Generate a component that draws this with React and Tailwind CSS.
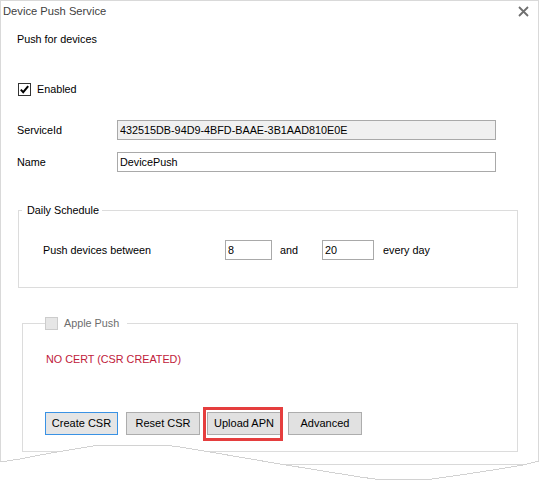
import React from "react";

function Check() {
  return (
    <div className="w-[13px] h-[13px] border border-[#333333] bg-white flex items-center justify-center">
      <svg width="11" height="11" viewBox="0 0 11 11">
        <path d="M1.8 5.6 L4.2 8.2 L9.2 2.2" fill="none" stroke="#000" strokeWidth="2" />
      </svg>
    </div>
  );
}

function Btn({ children, focused }) {
  return (
    <button
      className={
        focused
          ? "h-[23px] w-[73px] border border-[#3a92e4] bg-[#e5e5e5] text-[11px] text-black leading-none"
          : "h-[23px] w-[74px] border border-[#adadad] bg-[#e1e1e1] text-[11px] text-black leading-none"
      }
    >
      {children}
    </button>
  );
}

export default function App() {
  return (
    <div className="relative w-[539px] h-[481px] overflow-hidden bg-white text-[10.8px] text-black font-['Liberation_Sans',Arial,sans-serif]">
      <div className="w-[539px] h-[465px] border border-[#d9d9d9] flex flex-col">
        {/* title bar */}
        <div className="h-[21px] flex items-center justify-between pl-[2px] pr-[9px]">
          <span className="text-[11.2px] text-[#3f3f3f]">Device Push Service</span>
          <svg width="11" height="11" viewBox="0 0 11 11">
            <path d="M1 1 L10 10 M10 1 L1 10" stroke="#6f6f6f" strokeWidth="1.8" />
          </svg>
        </div>

        <div className="flex flex-col pl-[16px]">
          <div className="mt-[11px] h-[13px] leading-[13px]">Push for devices</div>

          <div className="mt-[37px] h-[13px] flex items-center ml-[1px]">
            <Check />
            <span className="ml-[6px] leading-[13px]">Enabled</span>
          </div>

          <div className="mt-[24px] h-[20px] flex items-center">
            <span className="w-[100px]">ServiceId</span>
            <input
              readOnly
              value="432515DB-94D9-4BFD-BAAE-3B1AAD810E0E"
              className="w-[379px] h-[20px] border border-[#a9a9a9] bg-[#f0f0f0] pl-[2px] text-[10.8px] outline-none"
            />
          </div>

          <div className="mt-[12px] h-[20px] flex items-center">
            <span className="w-[100px]">Name</span>
            <input
              readOnly
              value="DevicePush"
              className="w-[379px] h-[20px] border border-[#a9a9a9] bg-white pl-[2px] text-[10.8px] outline-none"
            />
          </div>

          {/* Daily Schedule */}
          <div className="relative mt-[38px] ml-[1px] w-[500px] h-[78px] border border-[#dcdcdc]">
            <span className="absolute left-[3px] -top-[7px] bg-white pl-[5px] pr-[3px] leading-[13px]">
              Daily Schedule
            </span>
            <div className="pt-[29px] pl-[24px] flex items-center">
              <span className="w-[182px]">Push devices between</span>
              <input
                readOnly
                value="8"
                className="w-[47px] h-[20px] border border-[#a9a9a9] bg-white pl-[2px] text-[10.8px] outline-none"
              />
              <span className="ml-[8px] w-[42px]">and</span>
              <input
                readOnly
                value="20"
                className="w-[52px] h-[20px] border border-[#a9a9a9] bg-white pl-[2px] text-[10.8px] outline-none"
              />
              <span className="ml-[9px]">every day</span>
            </div>
          </div>

          {/* Apple Push */}
          <div className="relative mt-[35px] ml-[5px] w-[496px] h-[129px] border border-[#dcdcdc]">
            <div className="absolute left-[22px] -top-[7px] bg-white pr-[8px] flex items-center h-[13px]">
              <div className="w-[13px] h-[13px] border border-[#cccccc] bg-[#e6e6e6]" />
              <span className="ml-[6px] text-[#6d6d6d] leading-[13px]">Apple Push</span>
            </div>
            <div className="mt-[29px] pl-[23px] h-[13px] leading-[13px] text-[#c0203a]">
              NO CERT (CSR CREATED)
            </div>
            <div className="mt-[46px] pl-[22px] flex items-center gap-[7px]">
              <Btn focused>Create CSR</Btn>
              <div className="ml-[1px]">
                <Btn>Reset CSR</Btn>
              </div>
              <div className="relative">
                <Btn>Upload APN</Btn>
                <div className="absolute -left-[4px] -top-[5px] w-[80px] h-[34px] border-[3px] border-[#e53e3e]" />
              </div>
              <Btn>Advanced</Btn>
            </div>
          </div>
        </div>
      </div>

      {/* torn bottom edge */}
      <svg
        className="absolute left-0 top-[440px] pointer-events-none"
        width="539"
        height="41"
        viewBox="0 440 539 41"
        shapeRendering="crispEdges"
      >
        <polygon
          fill="#ffffff"
          points="0,462 20,459 40,455 57,452 75,449 93,446 107,445 163,445 180,447 207,451.5 280,464 360,477 375,479 432,479 460,475 493,470 523,465 539,461 539,481 0,481"
        />
        <polyline
          fill="none"
          stroke="#d2d2d2"
          strokeWidth="1"
          points="0,462 20,459 40,455 57,452 75,449 93,446 107,445 163,445 180,447 207,451.5 280,464 360,477 375,479 432,479 460,475 493,470 523,465 539,461"
        />
      </svg>
    </div>
  );
}
